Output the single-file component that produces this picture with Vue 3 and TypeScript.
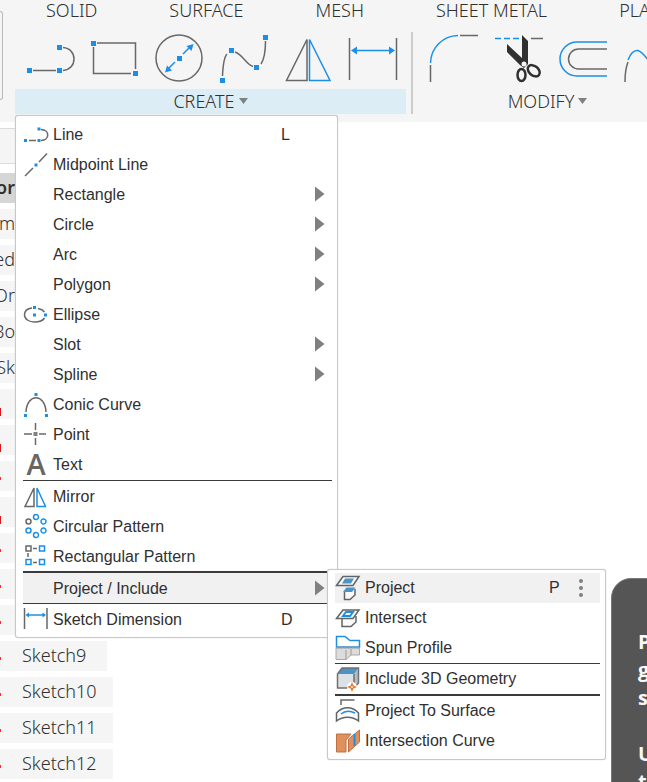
<script setup lang="ts">
interface Shape {
  c: string
  d: string
}
interface Tool {
  name: string
  x: number
  shapes: Shape[]
}
interface MenuItem {
  label: string
  icon?: Shape[]
  glyph?: string
  hint?: string
  more?: boolean
  active?: boolean
  rule?: 'low' | 'thick' | 'thin'
  options?: boolean
}
interface TreeRow {
  label: string
  kind: string
  mark?: string
}

const sq = (x: number, y: number, r: number): string =>
  `M${x - r} ${y - r}h${2 * r}v${2 * r}h${-2 * r}z`
const oval = (x: number, y: number, rx: number, ry: number = rx): string =>
  `M${x - rx} ${y}a${rx} ${ry} 0 1 0 ${2 * rx} 0a${rx} ${ry} 0 1 0 ${-2 * rx} 0z`
const g = (d: string): Shape => ({ c: 'gray', d })
const b = (d: string): Shape => ({ c: 'blue', d })
const dot = (...d: string[]): Shape => ({ c: 'dot', d: d.join('') })
const s = (c: string, d: string): Shape => ({ c, d })

const tabs: string[] = ['SOLID', 'SURFACE', 'MESH', 'SHEET METAL', 'PLASTIC']

const createTools: Tool[] = [
  {
    name: 'Line',
    x: 20,
    shapes: [
      g('M33 70.5H56M63 47.5C70 48 74 53 74 59S70 70 63 70.5'),
      dot(sq(29.5, 70.5, 2.5), sq(59.5, 70.5, 2.5), sq(59.5, 47.5, 2.5)),
    ],
  },
  {
    name: 'Rectangle',
    x: 84,
    shapes: [
      g('M97 43H135.5V69M131 73.5H93.5V47'),
      dot(sq(93.5, 43.5, 2.5), sq(135.5, 73.5, 2.5)),
    ],
  },
  {
    name: 'Circle',
    x: 148,
    shapes: [
      g(oval(179, 58, 23)),
      b('M183 54L189 48M175 62L169 68'),
      dot(sq(179.5, 58.5, 2.5), 'M193.500 44L191.500 51L186.500 46z', 'M165 72.500L167 65.500L172 70.500z'),
    ],
  },
  {
    name: 'Spline',
    x: 212,
    shapes: [
      g('M222.500 76C223 65 224 57 227 54M235 52C243 55 246 64 253 66.500M261 64C265 58 265.500 50 265.500 41'),
      dot(sq(222.5, 80.5, 2.5), sq(231.5, 50.5, 2.5), sq(256.5, 67.5, 2.5), sq(265.5, 37.5, 2.5)),
    ],
  },
  {
    name: 'Mirror',
    x: 276,
    shapes: [g('M286.500 80.500H307V39.500z'), b('M309.500 39.500V80.500H330z')],
  },
  {
    name: 'Sketch Dimension',
    x: 340,
    shapes: [
      g('M349.500 38V80M396.500 38V80'),
      b('M354 50.500H392'),
      dot('M351 50.500L357 46.500V54.500z', 'M395 50.500L389 46.500V54.500z'),
    ],
  },
]

const modifyTools: Tool[] = [
  {
    name: 'Fillet',
    x: 424,
    shapes: [g('M430.500 65V82M460 35.500H478'), b('M430.500 63C431 47 443 36 458 35.500')],
  },
  {
    name: 'Trim',
    x: 488,
    shapes: [
      b('M495 38.500H501M504 38.500H510M513 38.500H519'),
      g('M531 38.500H543'),
      s('ink', 'M522 35L528 41V64L524 68L520 65L507 52V44L522 58z'),
      s('ring', oval(521.5, 75, 4, 6) + 'M528.500 66.500A6.500 4.500 40 1 0 539 75A6.500 4.500 40 1 0 528.500 66.500z'),
      s('paper', oval(524, 64, 2.5)),
    ],
  },
  {
    name: 'Offset',
    x: 552,
    shapes: [b('M607 42H577A17 17 0 0 0 577 76H607'), g('M607 49H578.500A10 10 0 0 0 578.500 69H607')],
  },
  {
    name: 'Blend Curve',
    x: 616,
    shapes: [g('M625 82C625 75 626 67 628 62'), b('M628 60C631 52 634 50 638 50.500C643 52 646 58 650 62')],
  },
]

const menu: MenuItem[] = [
  {
    label: 'Line',
    hint: 'L',
    icon: [g('M6 21.500H13M18 10.500C27 11 27 21 18 21.500'), dot(sq(2.5, 21.5, 1.5), sq(16, 21.5, 1.5), sq(16, 10, 1.5))],
  },
  { label: 'Midpoint Line', icon: [g('M2 27L10 19M16 13L24 4.500'), dot(sq(13, 16, 1.5))] },
  { label: 'Rectangle', more: true },
  { label: 'Circle', more: true },
  { label: 'Arc', more: true },
  { label: 'Polygon', more: true },
  {
    label: 'Ellipse',
    icon: [
      g('M9 9C4 9.500 1.500 12.500 1.500 16C1.500 20 6 23 11.500 23C16 23 20 21.500 21.500 19M15 9.500C18 10 20 11 21.500 13'),
      dot(sq(11.5, 8.5, 1.5), sq(11.5, 16, 1.5), sq(22.5, 16, 1.5)),
    ],
  },
  { label: 'Slot', more: true },
  { label: 'Spline', more: true },
  { label: 'Conic Curve', icon: [g('M3 23C4 4 22 4 23 23'), dot(sq(2.5, 26.5, 1.5), sq(23.5, 26.5, 1.5), sq(13, 5.5, 1.5))] },
  { label: 'Point', icon: [g('M1 15H9M16 15H23M12.500 4V11M12.500 19V26'), s('solid', sq(12.5, 15, 2))] },
  { label: 'Text', glyph: 'A' },
  { label: 'Mirror', rule: 'low', icon: [g('M2 25.500H11V7z'), b('M14 7V25.500H22.500z')] },
  {
    label: 'Circular Pattern',
    icon: [
      g(oval(5.5, 10.5, 2.5)),
      b([oval(13, 6, 2.5), oval(20.5, 10.5, 2.5), oval(20.5, 19.5, 2.5), oval(13, 24, 2.5), oval(5.5, 19.5, 2.5)].join('')),
    ],
  },
  {
    label: 'Rectangular Pattern',
    icon: [g(sq(5.5, 7.5, 2.5) + 'M10 7.500H14M5 12V16M10 21.500H14'), b(sq(19, 7.5, 2.5) + sq(5.5, 21, 2.5) + sq(19, 21, 2.5))],
  },
  { label: 'Project / Include', rule: 'thick', more: true, active: true },
  {
    label: 'Sketch Dimension',
    rule: 'thin',
    hint: 'D',
    icon: [g('M1.500 4V25M24 4V25'), b('M5 11H21'), dot('M2.500 11L6 8.500V13.500z', 'M23 11L19.500 8.500V13.500z')],
  },
]

const submenu: MenuItem[] = [
  {
    label: 'Project',
    hint: 'P',
    active: true,
    options: true,
    icon: [
      s('plate', 'M1.500 12.500L8 3.500H24L18 12.500z'),
      s('steel', 'M7 10.500L10 5.500H19L16 10.500z'),
      s('plate', 'M9.500 19V26.500H15L20 22V16'),
      s('steel', 'M8 19L11.500 14.500H20.500L17 19z'),
    ],
  },
  {
    label: 'Intersect',
    icon: [
      s('plate', 'M7 16V23.500H16L21 19V13'),
      s('plate', 'M1.500 15.500L8 7H24L18 15.500z'),
      s('cell', 'M8 13L11 9H18L15 13z'),
    ],
  },
  {
    label: 'Spun Profile',
    icon: [
      s('body', 'M1 15H24.500V22H16L11 26.500H1z'),
      s('shade', 'M11 17V26.500M16 16V22'),
      s('sky', 'M1.500 14V3.500H10L15 7.500H24.500V14z'),
      s('dash', 'M1 14.500H25'),
    ],
  },
  {
    label: 'Include 3D Geometry',
    rule: 'low',
    icon: [
      s('face', 'M2.500 10H19V24H2.500z'),
      s('side', 'M19 10L23.500 4V19L19 24z'),
      s('steel', 'M2.500 10L7 4H23.500L19 10z'),
      s('frame', 'M2.500 10L7 4H23.500V19L19 24H2.500zM19 10V24'),
      s('halo', oval(17, 23, 5)),
      s('star', 'M17 18L18.500 21.500L22 23L18.500 24.500L17 28L15.500 24.500L12 23L15.500 21.500z'),
      s('paper', oval(17, 23, 1)),
    ],
  },
  {
    label: 'Project To Surface',
    rule: 'thick',
    icon: [
      g('M6 9V4H19.500'),
      s('plate', 'M1.500 25V17C8 10 17 10 23.500 17V25C17 20 8 20 1.500 25z'),
      b('M6 18C10 14.500 15 14.500 20 17'),
    ],
  },
  {
    label: 'Intersection Curve',
    icon: [
      s('clay', 'M1.500 8H16L11 14V26H1.500z'),
      s('clay', 'M13.500 13L24.500 4V16L13.500 26z'),
      s('cut', 'M19.500 8V20'),
    ],
  },
]

const tree: TreeRow[] = [
  { label: 'or', kind: 'edge root' },
  { label: 'm', kind: 'edge' },
  { label: 'ed', kind: 'edge' },
  { label: 'Or', kind: 'edge' },
  { label: 'Bo', kind: 'edge' },
  { label: 'Sk', kind: 'edge' },
  { label: '', kind: '', mark: 'bar' },
  { label: '', kind: '', mark: 'bar' },
  { label: '', kind: '', mark: 'tip' },
  { label: '', kind: '', mark: 'bar' },
  { label: '', kind: '', mark: 'tip' },
  { label: '', kind: '', mark: 'tip' },
  { label: '', kind: '', mark: 'tip' },
  { label: 'Sketch9', kind: '', mark: 'tip' },
  { label: 'Sketch10', kind: '', mark: 'tip' },
  { label: 'Sketch11', kind: '', mark: 'tip' },
  { label: 'Sketch12', kind: '', mark: 'tip' },
]

const panels = [
  { title: 'CREATE', tools: createTools, open: true },
  { title: 'MODIFY', tools: modifyTools, open: false },
]
const menus = [
  { name: 'create', items: menu },
  { name: 'project', items: submenu },
]
const tip: string[] = ['P', 'g', 's', '', 'U', 't']
</script>

<template>
  <div class="app">
    <header class="ribbon">
      <nav class="tabs">
        <a v-for="t in tabs" :key="t" href="#">{{ t }}</a>
      </nav>
      <div class="panels">
        <div class="stub"></div>
        <section v-for="p in panels" :key="p.title" class="panel" :class="{ open: p.open }">
          <div class="tools">
            <button v-for="t in p.tools" :key="t.name" type="button" class="tool" :aria-label="t.name">
              <svg width="64" height="56" :viewBox="`${t.x} 31 64 56`">
                <path v-for="(h, i) in t.shapes" :key="i" :class="h.c" :d="h.d" />
              </svg>
            </button>
          </div>
          <button type="button" class="title">
            {{ p.title }}
            <svg class="caret" width="9" height="6" viewBox="0 0 9 6"><path d="M0 0H9L4.500 6z" /></svg>
          </button>
        </section>
      </div>
    </header>

    <main class="browser">
      <div class="filter"></div>
      <ul class="tree">
        <li v-for="(r, i) in tree" :key="i" class="row" :class="[r.kind, r.mark]">{{ r.label }}</li>
      </ul>
    </main>

    <ul v-for="m in menus" :key="m.name" class="menu" :class="m.name">
      <li v-for="item in m.items" :key="item.label" :class="item.rule">
        <button type="button" class="item" :class="{ active: item.active }">
          <svg class="icon" width="26" height="30" viewBox="0 0 26 30">
            <path v-for="(h, i) in item.icon" :key="i" :class="h.c" :d="h.d" />
            <text v-if="item.glyph" class="glyph" x="13" y="26" text-anchor="middle">{{ item.glyph }}</text>
          </svg>
          <span class="label">{{ item.label }}</span>
          <span class="hint">{{ item.hint }}</span>
          <span class="end">
            <svg v-if="item.more" width="10" height="16" viewBox="0 0 10 16"><path class="arrow" d="M0 0.500L9.500 8L0 15.500z" /></svg>
            <svg v-if="item.options" width="6" height="20" viewBox="0 0 6 20">
              <circle v-for="y in [3, 10, 17]" :key="y" class="arrow" cx="3" :cy="y" r="2" />
            </svg>
          </span>
        </button>
      </li>
    </ul>

    <aside class="tip-card">
      <p v-for="(line, i) in tip" :key="i">{{ line }}</p>
    </aside>
  </div>
</template>

<style>
body {
  background: #fff;
}
</style>

<style scoped>
.app {
  position: relative;
  height: 100vh;
  overflow: hidden;
  color: #303030;
  font-family: "Noto Sans", "Open Sans", sans-serif;
  font-size: 18px;
  font-weight: 300;
}
button {
  margin: 0;
  padding: 0;
  border: 0;
  background: none;
  color: inherit;
  font: inherit;
}
ul {
  margin: 0;
  padding: 0;
  list-style: none;
}
svg {
  display: block;
  flex: none;
}
.ribbon {
  height: 122px;
  background: #f5f5f5;
}
.tabs {
  display: flex;
  gap: 72px;
  padding: 0 0 2px 46px;
  line-height: 20px;
  white-space: nowrap;
}
.tabs a {
  color: inherit;
  text-decoration: none;
}
.panels {
  display: flex;
}
.stub {
  flex: none;
  box-sizing: border-box;
  width: 3px;
  height: 89px;
  margin: -11px 12px 0 0;
  border: solid #b8b8b8;
  border-width: 1px 1px 1px 0;
  border-radius: 0 4px 4px 0;
}
.panel {
  flex: none;
  padding: 9px 5px 0 0;
}
.panel.open {
  border-right: 2px solid #ccc;
  border-image: linear-gradient(transparent 11px, #ccc 11px) 1;
}
.panel:not(.open) {
  padding-right: 0;
}
.tools {
  display: flex;
  padding: 0 2px 0 5px;
}
.panel:not(.open) .tools {
  padding-left: 11px;
}
.tool {
  display: block;
}
.title {
  display: flex;
  align-items: center;
  justify-content: center;
  gap: 4px;
  box-sizing: border-box;
  width: 100%;
  height: 25px;
  margin-top: 2px;
  padding-bottom: 2px;
}
.open .title {
  background: #dcedf5;
}
.caret {
  fill: #808080;
}
.browser {
  padding-top: 6px;
}
.filter {
  box-sizing: border-box;
  height: 36px;
  border: solid #dcdcdc;
  border-width: 1px 0;
  background: #f5f5f5;
  width: 100px;
}
.tree {
  display: flex;
  flex-direction: column;
  align-items: flex-start;
  gap: 6px;
  padding-top: 9px;
}
.row {
  position: relative;
  flex: none;
  box-sizing: border-box;
  height: 30px;
  min-width: 107px;
  padding: 0 16px 0 22px;
  background: #f5f5f5;
  line-height: 28px;
}
.row.edge {
  display: flex;
  justify-content: flex-end;
  width: 15px;
  min-width: 0;
  padding: 0;
  overflow: hidden;
}
.row.root {
  background: #d6d6d6;
  font-weight: 600;
}
.bar::before,
.tip::before {
  content: "";
  position: absolute;
  left: 0;
  top: 16px;
  width: 1px;
  height: 3px;
  background: #ff2a2a;
}
.bar::before {
  top: 19px;
  height: 8px;
  background: #d81818;
}
.menu {
  position: absolute;
  box-sizing: border-box;
  padding: 3px 5px 3px 7px;
  border: 1px solid #c8c8c8;
  border-radius: 3px;
  background: #fff;
  box-shadow: 0 0 1px #bbb;
  font-family: "Liberation Sans", Arial, sans-serif;
  font-size: 16px;
  font-weight: 400;
}
.menu.create {
  left: 15px;
  top: 115px;
  width: 323px;
}
.menu.project {
  left: 327px;
  top: 569px;
  width: 279px;
}
.low {
  margin-top: 1px;
  border-top: 1px solid #3a3a3a;
}
.project .low {
  margin-top: 0;
}
.thick {
  border-top: 2px solid #3a3a3a;
}
.thin {
  border-top: 1px solid #3a3a3a;
}
.item {
  display: flex;
  align-items: center;
  width: 100%;
  height: 30px;
  text-align: left;
}
.item.active {
  background: #f1f1f1;
}
.label {
  flex: 1;
  padding-left: 4px;
}
.create .label,
.create .hint {
  padding-top: 2px;
}
.hint {
  width: 12px;
}
.end {
  display: flex;
  width: 39px;
  justify-content: flex-end;
}
.end svg {
  margin-right: 7px;
}
.project .end svg {
  margin-right: 16px;
}
.glyph {
  fill: #666;
  font: 600 29px "Open Sans", sans-serif;
}
.arrow,
.solid {
  fill: #808080;
}
.gray,
.blue,
.sky,
.cut,
.shade,
.dash,
.frame {
  fill: none;
  stroke: #686868;
  stroke-width: 1.5;
}
.blue,
.cut,
.sky {
  stroke: #1b8fe8;
}
.sky {
  fill: #fff;
}
.cut {
  stroke-width: 2;
}
.shade {
  stroke: #999;
  stroke-width: 1;
}
.dash {
  stroke: #999;
  stroke-dasharray: 3 1;
}
.frame {
  stroke: #707070;
}
.dot {
  fill: #1b8fe8;
}
.ink {
  fill: #303030;
}
.ring {
  fill: none;
  stroke: #303030;
  stroke-width: 2.5;
}
.paper {
  fill: #f5f5f5;
}
.halo {
  fill: #fff;
}
.plate {
  fill: #fafafa;
  stroke: #606468;
  stroke-width: 1.5;
}
.steel {
  fill: #4c93c6;
}
.cell {
  fill: #fff;
  stroke: #1b8fe8;
  stroke-width: 2;
}
.body {
  fill: #dcdcdc;
  stroke: #aaa;
}
.face {
  fill: #dce1e6;
}
.side {
  fill: #b4bcc4;
}
.star {
  fill: #e87a35;
}
.clay {
  fill: #e0905c;
  stroke: #c07040;
}
.tip-card {
  position: absolute;
  left: 611px;
  right: -20px;
  top: 578px;
  bottom: -20px;
  padding: 49px 0 0 26px;
  border: 1px solid #777;
  border-radius: 20px;
  background: #555;
  color: #f8f8f8;
  font-family: "Open Sans", "Noto Sans", sans-serif;
  font-size: 20px;
  font-weight: 700;
  line-height: 28px;
  overflow: hidden;
}
.tip-card p {
  min-height: 28px;
  margin: 0;
}
</style>
